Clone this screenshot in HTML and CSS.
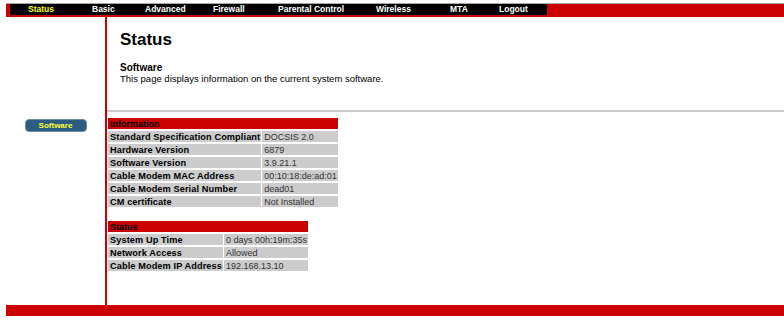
FILE: index.html
```html
<!DOCTYPE html>
<html lang="en">
<head>
  <meta charset="UTF-8" />
  <title>Status - Software</title>
  <link rel="stylesheet" href="styles.css">
</head>
<body>
  <div class="page">
    <div class="topbar">
      <div class="nav">
        <a href="#" class="active w1">Status</a>
        <a href="#" class="w2">Basic</a>
        <a href="#" class="w3">Advanced</a>
        <a href="#" class="w4">Firewall</a>
        <a href="#" class="w5">Parental Control</a>
        <a href="#" class="w6">Wireless</a>
        <a href="#" class="w7">MTA</a>
        <a href="#" class="w8">Logout</a>
      </div>
    </div>

    <div class="main">
      <div class="side">
        <a href="#" class="side-btn">Software</a>
      </div>

      <div class="content">
        <div class="intro">
          <h1>Status</h1>
          <h2>Software</h2>
          <p>This page displays information on the current system software.</p>
        </div>

        <table class="info">
          <tr><th colspan="2">Information</th></tr>
          <tr><td class="lbl">Standard Specification Compliant</td><td>DOCSIS 2.0</td></tr>
          <tr><td class="lbl">Hardware Version</td><td>6879</td></tr>
          <tr><td class="lbl">Software Version</td><td>3.9.21.1</td></tr>
          <tr><td class="lbl">Cable Modem MAC Address</td><td>00:10:18:de:ad:01</td></tr>
          <tr><td class="lbl">Cable Modem Serial Number</td><td>dead01</td></tr>
          <tr><td class="lbl">CM certificate</td><td>Not Installed</td></tr>
        </table>

        <table class="info status">
          <tr><th colspan="2">Status</th></tr>
          <tr><td class="lbl">System Up Time</td><td>0 days 00h:19m:35s</td></tr>
          <tr><td class="lbl">Network Access</td><td>Allowed</td></tr>
          <tr><td class="lbl">Cable Modem IP Address</td><td>192.168.13.10</td></tr>
        </table>
      </div>
    </div>

    <div class="footer"></div>
  </div>
</body>
</html>
```

FILE: styles.css
```css
body {
  margin: 0;
  background-color: #fff;
  font-family: "Liberation Sans", Arial, sans-serif;
}

.page {
  padding: 3px 0 0 6px;
}

/* top navigation */
.topbar {
  display: flex;
  background-color: #cc0000;
  border-top: 1px solid #a8a8a8;
  padding: 0 0 2px 4px;
}

.nav {
  display: flex;
  width: 537px;
  height: 11px;
  padding-left: 18px;
  box-sizing: border-box;
  background-color: #000;
}

.nav a {
  color: #fff;
  font-size: 8.5px;
  font-weight: bold;
  line-height: 11px;
  text-decoration: none;
}

.nav a.active {
  color: #ffff00;
}

.w1 { width: 64px; }
.w2 { width: 53px; }
.w3 { width: 68px; }
.w4 { width: 65px; }
.w5 { width: 98px; }
.w6 { width: 74px; }
.w7 { width: 49px; }

/* body area */
.main {
  display: flex;
  height: 288px;
}

.side {
  width: 99px;
  flex-shrink: 0;
  border-right: 2px solid #cc0000;
  display: flex;
  justify-content: center;
  align-items: flex-start;
  padding-top: 102px;
}

.side-btn {
  display: block;
  width: 62px;
  height: 13px;
  box-sizing: border-box;
  border: 1px solid #6d8da5;
  border-radius: 4px;
  background-color: #2b5d82;
  color: #ffff33;
  font-size: 8px;
  font-weight: bold;
  line-height: 11px;
  text-align: center;
  text-decoration: none;
}

.content {
  flex: 1;
}

.intro {
  padding: 13px 0 26px 13px;
  border-bottom: 2px solid #cccccc;
}

.intro h1 {
  margin: 0 0 12px;
  font-size: 17px;
  line-height: 20px;
  color: #000;
}

.intro h2 {
  margin: 0;
  font-size: 10px;
  line-height: 11px;
  color: #000;
}

.intro p {
  margin: 0;
  font-size: 9.5px;
  line-height: 11px;
  color: #000;
}

/* data tables */
.info {
  border-collapse: separate;
  border-spacing: 1px 2px;
  margin-top: 4px;
}

.info.status {
  margin-top: 10px;
}

.info th {
  background-color: #cc0000;
  color: #000;
  font-size: 9px;
  font-weight: bold;
  text-align: left;
  height: 11px;
  padding: 0 2px;
  line-height: 10px;
}

.info td {
  background-color: #cccccc;
  color: #333;
  font-size: 9px;
  height: 11px;
  padding: 0 1px 0 2px;
  line-height: 10px;
  white-space: nowrap;
}

.info td.lbl {
  color: #000;
  font-size: 9.2px;
  font-weight: bold;
  letter-spacing: 0.1px;
}

.footer {
  height: 11px;
  background-color: #cc0000;
}
```
